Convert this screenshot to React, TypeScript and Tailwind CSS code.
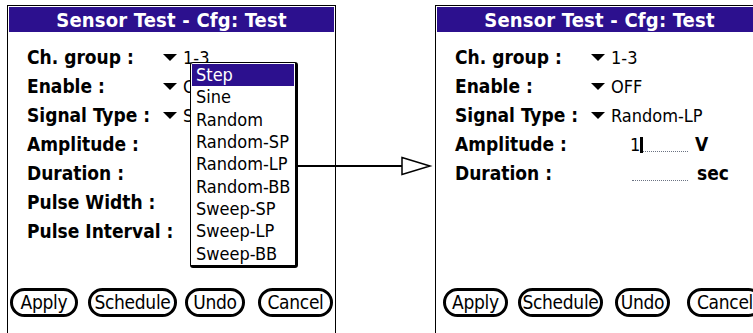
import React from "react";

const PURPLE = "bg-[#2c108e]";

function Tri() {
  return (
    <svg width="14" height="8" viewBox="0 0 14 8" className="shrink-0">
      <polygon points="0,0 14,0 7,7" fill="#000" />
    </svg>
  );
}

type Btn = { label: string; w: number; ml: number };

function Buttons({ items }: { items: Btn[] }) {
  return (
    <div className="mt-auto flex pb-[17px]">
      {items.map((b) => (
        <div
          key={b.label}
          style={{ width: b.w, marginLeft: b.ml }}
          className="flex h-[29px] shrink-0 items-center justify-center rounded-full border-[3px] border-black text-[19px] leading-none tracking-[-0.3px] text-black"
        >
          {b.label}
        </div>
      ))}
    </div>
  );
}

function Row({ label, children }: { label: string; children?: React.ReactNode }) {
  return (
    <div className="flex h-[29px] items-center">
      <div className="w-[136px] shrink-0 whitespace-nowrap text-[19px] font-bold leading-none text-black">
        {label}
      </div>
      {children}
    </div>
  );
}

function Pick({ value }: { value: string }) {
  return (
    <div className="flex items-center">
      <Tri />
      <span className="ml-[6px] text-[18px] leading-none text-black">{value}</span>
    </div>
  );
}

function Title() {
  return (
    <div
      className={`${PURPLE} flex h-[25px] items-center justify-center text-[20px] font-bold leading-none tracking-[0.2px] text-white`}
    >
      Sensor Test - Cfg: Test
    </div>
  );
}

const font = {
  fontFamily: "'DejaVu Sans Condensed','DejaVu Sans',sans-serif",
  fontStretch: "condensed" as const,
};

const items = [
  "Step",
  "Sine",
  "Random",
  "Random-SP",
  "Random-LP",
  "Random-BB",
  "Sweep-SP",
  "Sweep-LP",
  "Sweep-BB",
];

export default function App() {
  return (
    <div
      className="relative flex h-[333px] w-[753px] overflow-hidden bg-white"
      style={font}
    >
      {/* Left screen */}
      <div className="relative ml-[7px] mt-[5px] flex h-[331px] w-[329px] shrink-0 flex-col border border-black bg-white p-px">
        <Title />
        <div className="flex flex-col pl-[18px] pt-[11px]">
          <Row label="Ch. group :">
            <Pick value="1-3" />
          </Row>
          <Row label="Enable :">
            <Pick value="OFF" />
          </Row>
          <Row label="Signal Type :">
            <Pick value="Step" />
          </Row>
          <Row label="Amplitude :" />
          <Row label="Duration :" />
          <Row label="Pulse Width :" />
          <Row label="Pulse Interval :" />
        </div>
        <Buttons
          items={[
            { label: "Apply", w: 68, ml: 1 },
            { label: "Schedule", w: 89, ml: 10 },
            { label: "Undo", w: 60, ml: 8 },
            { label: "Cancel", w: 75, ml: 13 },
          ]}
        />

        {/* popup list */}
        <div className="absolute left-[182px] top-[56px] flex h-[206px] w-[108px] flex-col rounded-[3px] border-b-[3px] border-l border-r-[3px] border-t border-black bg-white px-px pt-px">
          {items.map((it, i) => (
            <div
              key={it}
              className={`flex h-[22.4px] items-center pl-[4px] text-[18px] leading-none ${
                i === 0 ? `${PURPLE} text-white` : "text-black"
              }`}
            >
              {it}
            </div>
          ))}
        </div>
      </div>

      {/* Right screen */}
      <div className="ml-[99px] mt-[5px] flex h-[331px] w-[329px] shrink-0 flex-col border border-black bg-white p-px">
        <Title />
        <div className="flex flex-col pl-[18px] pt-[11px]">
          <Row label="Ch. group :">
            <Pick value="1-3" />
          </Row>
          <Row label="Enable :">
            <Pick value="OFF" />
          </Row>
          <Row label="Signal Type :">
            <Pick value="Random-LP" />
          </Row>
          <Row label="Amplitude :">
            <div className="ml-[39px] flex h-[18px] w-[58px] items-end">
              <span className="text-[18px] leading-none text-black">1</span>
              <span className="mb-[1px] h-[16px] w-[3px] bg-black" />
              <span className="mb-[2px] flex-1 border-b border-dotted border-gray-500" />
            </div>
            <span className="ml-[7px] text-[19px] font-bold leading-none text-black">V</span>
          </Row>
          <Row label="Duration :">
            <div className="ml-[41px] flex h-[18px] w-[56px] items-end">
              <span className="mb-[2px] flex-1 border-b border-dotted border-gray-500" />
            </div>
            <span className="ml-[9px] text-[19px] font-bold leading-none text-black">sec</span>
          </Row>
        </div>
        <Buttons
          items={[
            { label: "Apply", w: 65, ml: 6 },
            { label: "Schedule", w: 85, ml: 10 },
            { label: "Undo", w: 55, ml: 12 },
            { label: "Cancel", w: 76, ml: 17 },
          ]}
        />
      </div>

      {/* arrow */}
      <svg
        className="pointer-events-none absolute left-[298px] top-[155px]"
        width="136"
        height="22"
        viewBox="0 0 136 22"
      >
        <line x1="0" y1="11" x2="104" y2="11" stroke="#000" strokeWidth="2" />
        <polygon points="104,2.5 132,11 104,19.5" fill="#fff" stroke="#000" strokeWidth="1.5" />
      </svg>
    </div>
  );
}
